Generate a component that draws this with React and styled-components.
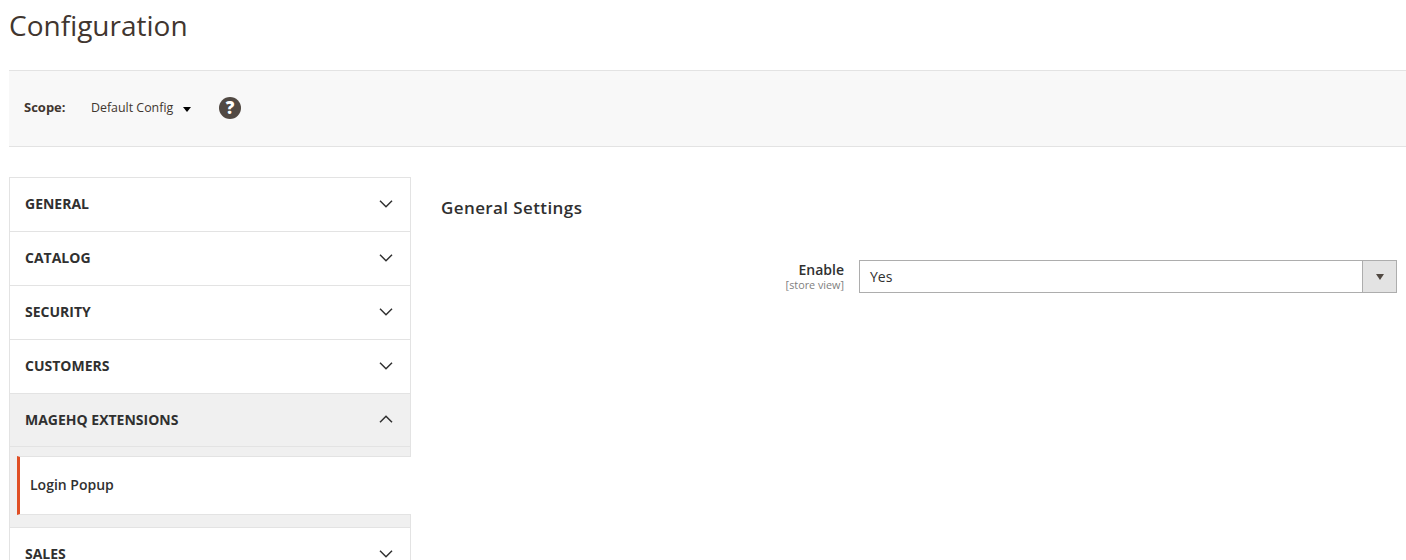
import React from "react";
import styled, { createGlobalStyle } from "styled-components";

const GlobalStyle = createGlobalStyle`
  html, body {
    margin: 0;
    padding: 0;
    background: #fff;
    overflow: hidden;
  }
  body {
    font-family: "Open Sans", "Noto Sans", sans-serif;
    color: #41362f;
  }
`;

const Page = styled.div`
  width: 1406px;
  height: 560px;
  overflow: hidden;
  padding-left: 9px;
  box-sizing: border-box;
`;

const Title = styled.h1`
  margin: 0;
  height: 70px;
  padding-top: 6px;
  box-sizing: border-box;
  font-size: 28px;
  line-height: 38px;
  font-weight: 400;
  color: #41362f;
`;

const ScopeBar = styled.div`
  height: 77px;
  box-sizing: border-box;
  display: flex;
  align-items: center;
  padding: 0 0 2px 15px;
  background: #f8f8f8;
  border-top: 1px solid #e3e3e3;
  border-bottom: 1px solid #e3e3e3;
  font-size: 13px;
`;

const ScopeLabel = styled.span`
  font-weight: 700;
  width: 67px;
  margin-bottom: 2px;
`;

const ScopeValue = styled.span`
  width: 124px;
  display: flex;
  align-items: center;
  white-space: nowrap;
  font-size: 12.4px;
  line-height: 18px;
`;

const Caret = styled.span`
  margin: 3px 0 0 10px;
  border-top: 5px solid #000;
  border-left: 4px solid transparent;
  border-right: 4px solid transparent;
`;

const Columns = styled.div`
  display: flex;
  margin-top: 30px;
`;

const Sidebar = styled.nav`
  width: 402px;
  flex-shrink: 0;
  box-sizing: border-box;
  border-left: 1px solid #e3e3e3;
  border-right: 1px solid #e3e3e3;
  border-top: 1px solid #e3e3e3;
`;

const Section = styled.div`
  height: ${(p) => (p.$open ? "53px" : "54px")};
  box-sizing: border-box;
  display: flex;
  align-items: center;
  justify-content: space-between;
  padding: 0 17px 2px 15px;
  background: ${(p) => (p.$open ? "#f0f0f0" : "#fff")};
  border-bottom: 1px solid #e3e3e3;
  font-size: 14px;
  font-weight: 700;
  color: #303030;
`;

const SubPanel = styled.div`
  background: #f0f0f0;
  padding-top: 9px;
  padding-bottom: 12px;
  border-bottom: 1px solid #e3e3e3;
`;

const SubItem = styled.div`
  height: 59px;
  margin: 0 -1px 0 7px;
  box-sizing: border-box;
  display: flex;
  align-items: center;
  padding: 0 0 2px 10px;
  background: #fff;
  border-left: 3px solid #e04f25;
  border-top: 1px solid #e3e3e3;
  border-bottom: 1px solid #e3e3e3;
  font-size: 14px;
  font-weight: 600;
  color: #303030;
`;

const Content = styled.main`
  flex: 1;
  padding: 20px 9px 0 30px;
`;

const SettingsTitle = styled.h2`
  margin: 0 0 41px;
  font-size: 17px;
  line-height: 22px;
  font-weight: 600;
  letter-spacing: 0.4px;
  color: #303030;
`;

const Field = styled.div`
  display: flex;
  justify-content: flex-end;
  gap: 15px;
`;

const FieldLabel = styled.div`
  display: flex;
  flex-direction: column;
  align-items: flex-end;
  font-size: 14px;
  font-weight: 600;
  line-height: 19px;
  color: #303030;
`;

const ScopeHint = styled.span`
  font-size: 10.8px;
  line-height: 12px;
  font-weight: 400;
  color: #808080;
`;

const Select = styled.div`
  width: 538px;
  height: 33px;
  box-sizing: border-box;
  display: flex;
  justify-content: space-between;
  border: 1px solid #adadad;
  background: #fff;
  font-size: 14px;
  line-height: 31px;
  padding-left: 10px;
  color: #303030;
`;

const SelectButton = styled.span`
  width: 33px;
  display: flex;
  align-items: center;
  justify-content: center;
  background: #e3e3e3;
  border-left: 1px solid #adadad;
  &::after {
    content: "";
    border-top: 6px solid #514943;
    border-left: 4px solid transparent;
    border-right: 4px solid transparent;
  }
`;

const Chevron = ({ up }) => (
  <svg width="14" height="8" viewBox="0 0 14 8" fill="none" stroke="#303030" strokeWidth="1.5">
    <path d={up ? "M1 7.2 7 1.2l6 6" : "M1 .8l6 6 6-6"} />
  </svg>
);

const HelpIcon = styled.span`
  width: 22px;
  height: 22px;
  border-radius: 50%;
  background: #514943;
  color: #fff;
  display: flex;
  align-items: center;
  justify-content: center;
  margin-left: 4px;
  font-size: 17px;
  font-weight: 800;
`;

const closedTop = ["GENERAL", "CATALOG", "SECURITY", "CUSTOMERS"];

export default function App() {
  return (
    <>
      <GlobalStyle />
      <Page>
        <Title>Configuration</Title>
        <ScopeBar>
          <ScopeLabel>Scope:</ScopeLabel>
          <ScopeValue>
            Default Config
            <Caret />
          </ScopeValue>
          <HelpIcon>?</HelpIcon>
        </ScopeBar>
        <Columns>
          <Sidebar>
            {closedTop.map((name) => (
              <Section key={name}>
                {name}
                <Chevron />
              </Section>
            ))}
            <Section $open>
              MAGEHQ EXTENSIONS
              <Chevron up />
            </Section>
            <SubPanel>
              <SubItem>Login Popup</SubItem>
            </SubPanel>
            <Section>
              SALES
              <Chevron />
            </Section>
          </Sidebar>
          <Content>
            <SettingsTitle>General Settings</SettingsTitle>
            <Field>
              <FieldLabel>
                Enable
                <ScopeHint>[store view]</ScopeHint>
              </FieldLabel>
              <Select>
                Yes
                <SelectButton />
              </Select>
            </Field>
          </Content>
        </Columns>
      </Page>
    </>
  );
}
